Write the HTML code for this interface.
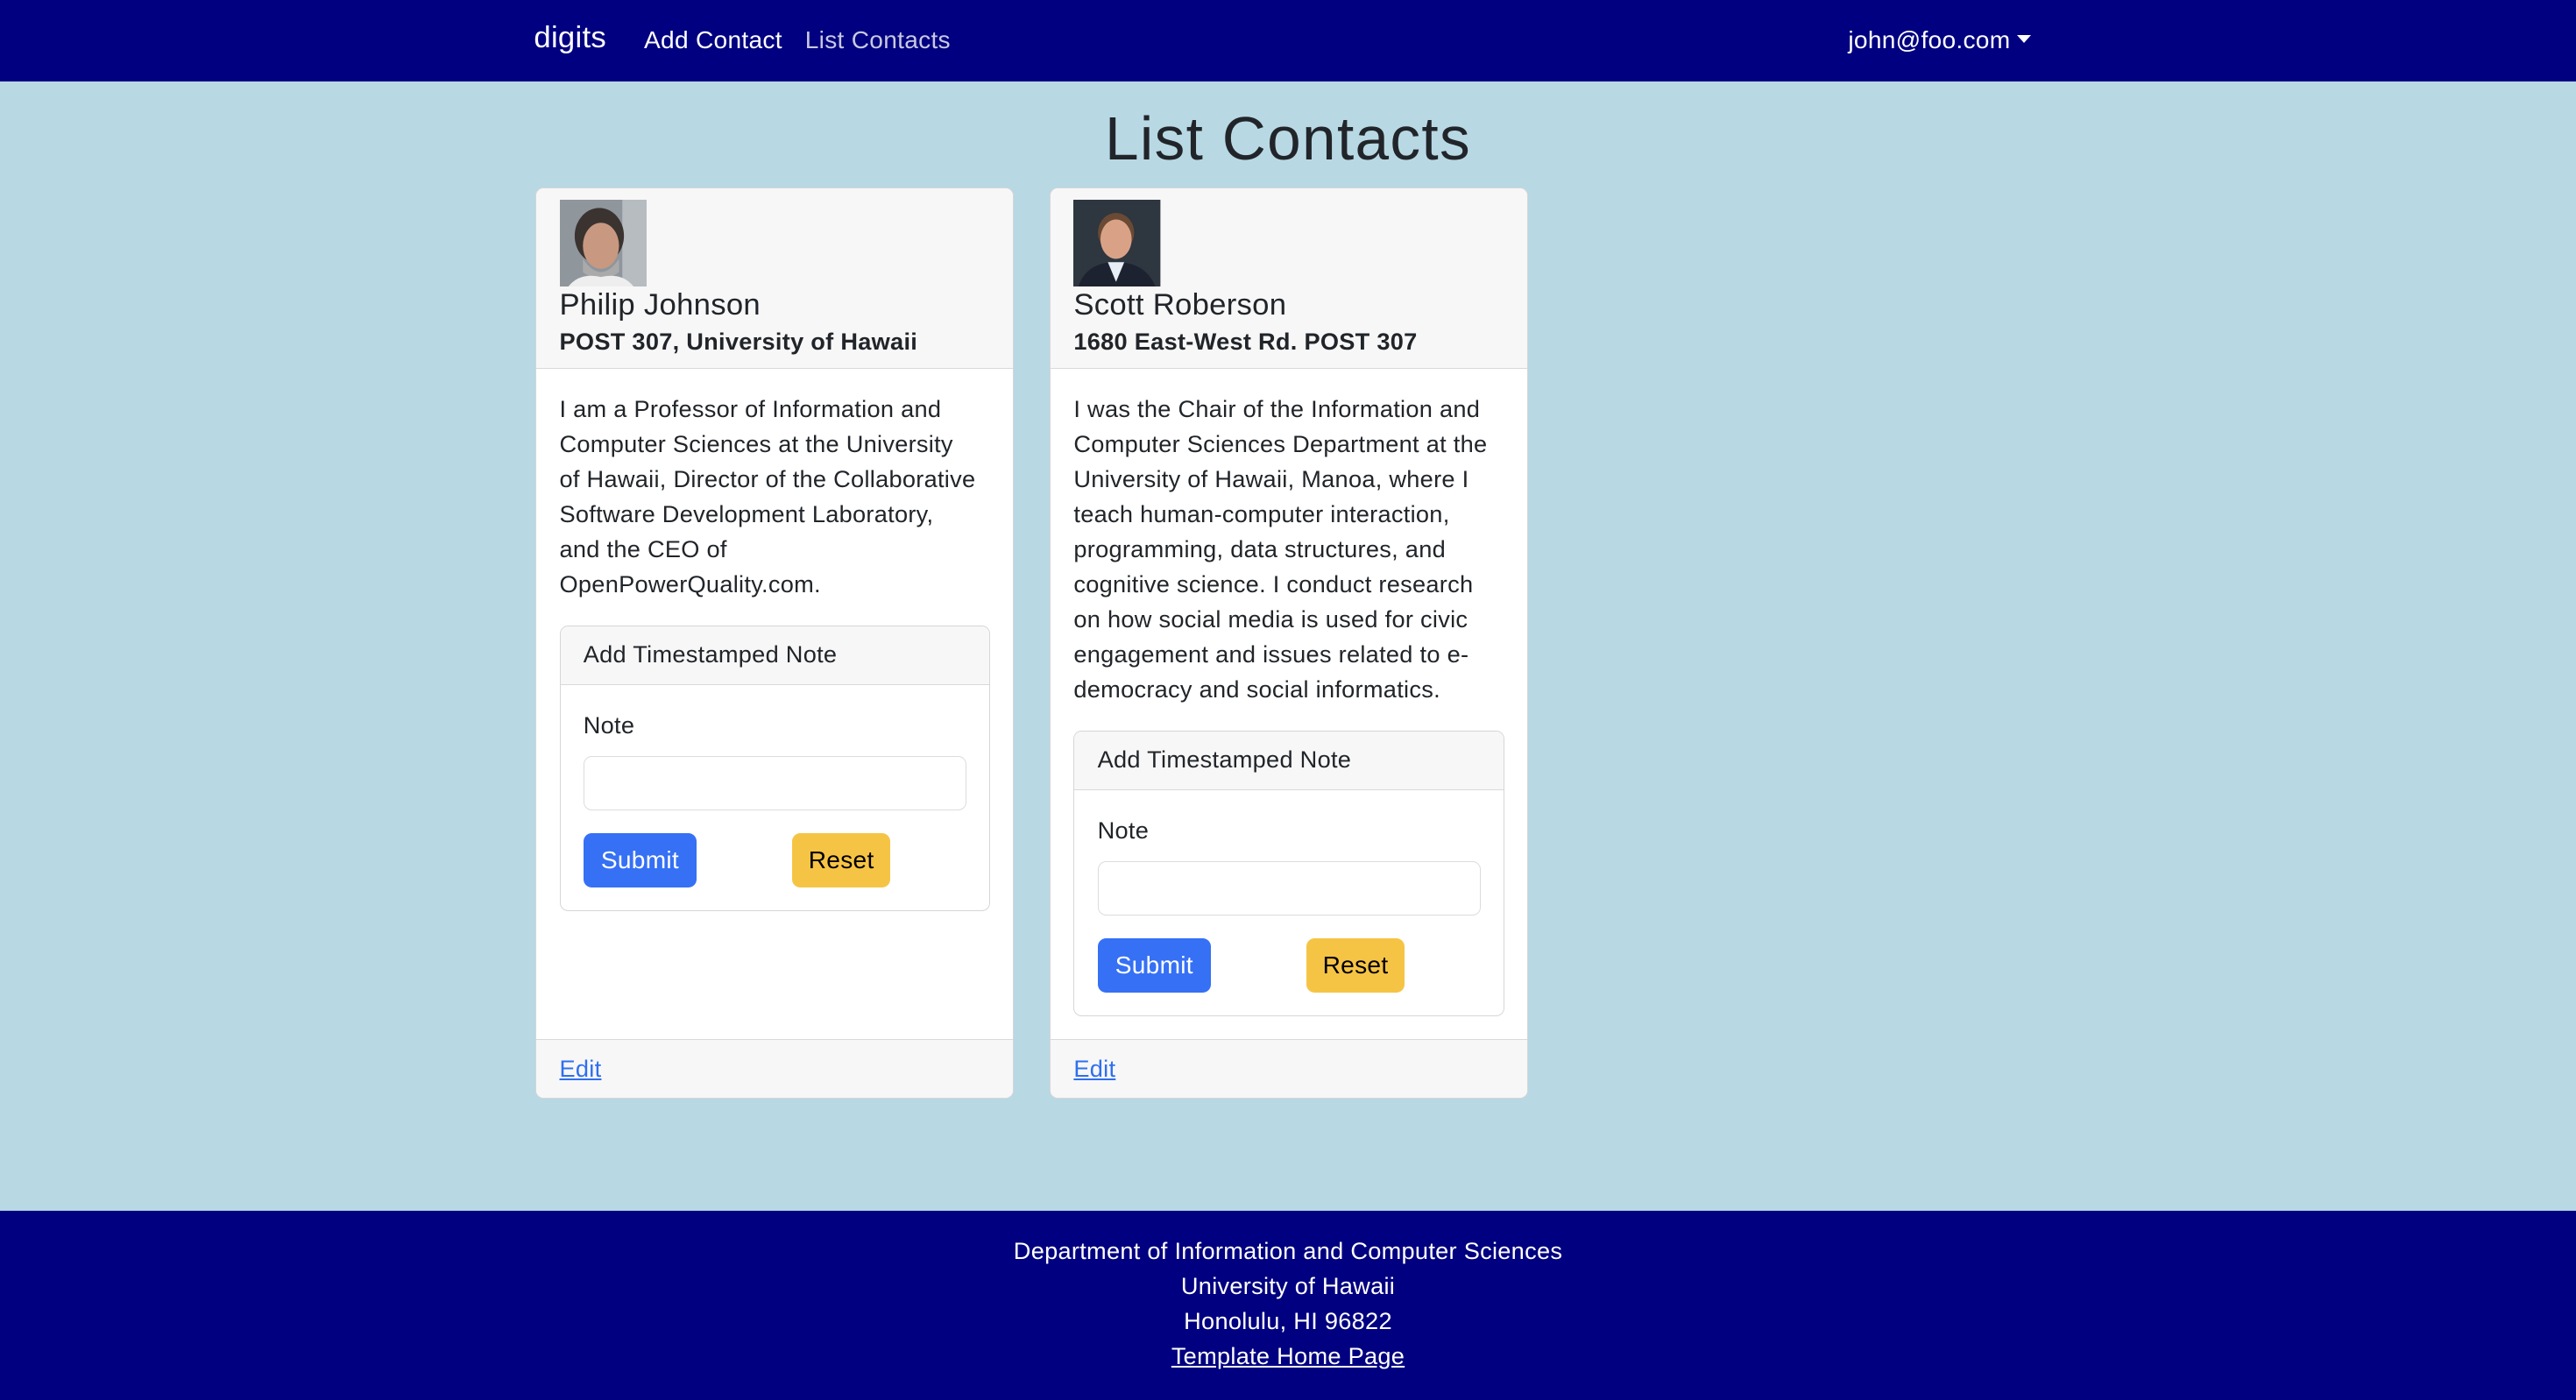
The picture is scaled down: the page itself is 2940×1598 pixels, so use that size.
<!DOCTYPE html>
<html><head><meta charset="utf-8">
<style>
html{zoom:1.875}
*{box-sizing:border-box;margin:0;padding:0}
body{width:1568px;height:851.2px;background:#b8d8e4;font-family:"Liberation Sans",sans-serif;color:#212529;font-size:15px;position:relative;overflow:hidden;letter-spacing:0.15px}
.a{position:absolute;white-space:nowrap}
.nav{position:absolute;left:0;top:0;width:1568px;height:49.5px;background:#000080}
.nav .a{color:#fff;top:16px;font-size:15px}
.card{position:absolute;background:#fff;border:1px solid #d6d6d6;border-radius:5px;overflow:hidden}
.hd{position:absolute;left:0;top:0;right:0;height:110px;background:#f7f7f7;border-bottom:1px solid #d9d9d9}
.ft{position:absolute;left:0;bottom:0;right:0;height:36px;background:#f7f7f7;border-top:1px solid #d9d9d9}
.img{position:absolute;left:14px;top:7px;width:53px;height:53px}
.name{position:absolute;left:14px;top:61px;font-size:18.5px}
.addr{position:absolute;left:14px;top:85px;font-size:14.5px;font-weight:bold}
.txt{position:absolute;left:14px;width:275px;font-size:14.5px;line-height:21.3px;white-space:nowrap}
.in{position:absolute;left:14px;width:262px;border:1px solid #d6d6d6;border-radius:5px;overflow:hidden;background:#fff}
.in .h{height:36px;background:#f7f7f7;border-bottom:1px solid #d9d9d9;padding:9px 14px;font-size:14.5px}
.lab{position:absolute;left:14px;top:52px;font-size:14.5px}
.inp{position:absolute;left:14px;top:79px;width:233px;height:33px;border:1px solid #dcdcdc;border-radius:5px}
.b{position:absolute;top:126px;height:33px;border-radius:5px;font-size:15px;line-height:33px;text-align:center}
.sub{left:14px;width:69px;background:#3570f5;color:#fff}
.res{left:141px;width:60px;background:#f6c445;color:#000}
.edit{position:absolute;left:14px;top:9px;color:#2f6fef;text-decoration:underline;font-size:14.5px}
.foot{position:absolute;left:0;top:737px;width:1568px;height:115px;background:#000080;color:#fff;text-align:center;font-size:14.5px;line-height:21.3px;padding-top:14px}
</style></head><body>
<div class="nav">
<span class="a" style="left:325px;top:13px;font-size:18.5px">digits</span>
<span class="a" style="left:392px">Add Contact</span>
<span class="a" style="left:490px;color:#c8c8e0">List Contacts</span>
<span class="a" style="left:1125px">john@foo.com<span style="display:inline-block;margin-left:4px;vertical-align:3px;border-left:4.5px solid transparent;border-right:4.5px solid transparent;border-top:5px solid #fff"></span></span>
</div>
<div class="a" style="left:0;width:1568px;text-align:center;top:63px;font-size:37px;letter-spacing:0.7px">List Contacts</div>

<div class="card" style="left:326px;top:114px;width:291px;height:555px">
<div class="hd">
<svg class="img" viewBox="0 0 53 53"><rect width="53" height="53" fill="#8f969c"/><rect x="38" width="15" height="53" fill="#b6bcc0"/><ellipse cx="24" cy="22" rx="15" ry="17" fill="#3a3330"/><ellipse cx="25" cy="28" rx="11" ry="14" fill="#c99880"/><path d="M14 36 Q25 52 36 36 L36 44 Q25 53 14 44Z" fill="#aaa"/><path d="M5 53 Q12 44 25 47 Q38 44 45 53Z" fill="#eee"/></svg>
<div class="name">Philip Johnson</div>
<div class="addr">POST 307, University of Hawaii</div>
</div>
<div class="txt" style="top:124px">I am a Professor of Information and<br>Computer Sciences at the University<br>of Hawaii, Director of the Collaborative<br>Software Development Laboratory,<br>and the CEO of<br>OpenPowerQuality.com.</div>
<div class="in" style="top:266px;height:174px"><div class="h">Add Timestamped Note</div>
<div class="lab">Note</div><div class="inp"></div>
<div class="b sub">Submit</div><div class="b res">Reset</div></div>
<div class="ft"><span class="edit">Edit</span></div>
</div>

<div class="card" style="left:639px;top:114px;width:291px;height:555px">
<div class="hd">
<svg class="img" viewBox="0 0 53 53"><rect width="53" height="53" fill="#2e3640"/><ellipse cx="26" cy="20" rx="11" ry="12" fill="#6a4a34"/><ellipse cx="26" cy="24" rx="9.5" ry="12" fill="#d9a287"/><path d="M3 53 Q8 38 26 38 Q44 38 50 53Z" fill="#1c2230"/><path d="M21 38 L26 50 L31 38Z" fill="#e8eef5"/></svg>
<div class="name">Scott Roberson</div>
<div class="addr">1680 East-West Rd. POST 307</div>
</div>
<div class="txt" style="top:124px">I was the Chair of the Information and<br>Computer Sciences Department at the<br>University of Hawaii, Manoa, where I<br>teach human-computer interaction,<br>programming, data structures, and<br>cognitive science. I conduct research<br>on how social media is used for civic<br>engagement and issues related to e-<br>democracy and social informatics.</div>
<div class="in" style="top:330px;height:174px"><div class="h">Add Timestamped Note</div>
<div class="lab">Note</div><div class="inp"></div>
<div class="b sub">Submit</div><div class="b res">Reset</div></div>
<div class="ft"><span class="edit">Edit</span></div>
</div>

<div class="foot">Department of Information and Computer Sciences<br>University of Hawaii<br>Honolulu, HI 96822<br><span style="text-decoration:underline">Template Home Page</span></div>
</body></html>
